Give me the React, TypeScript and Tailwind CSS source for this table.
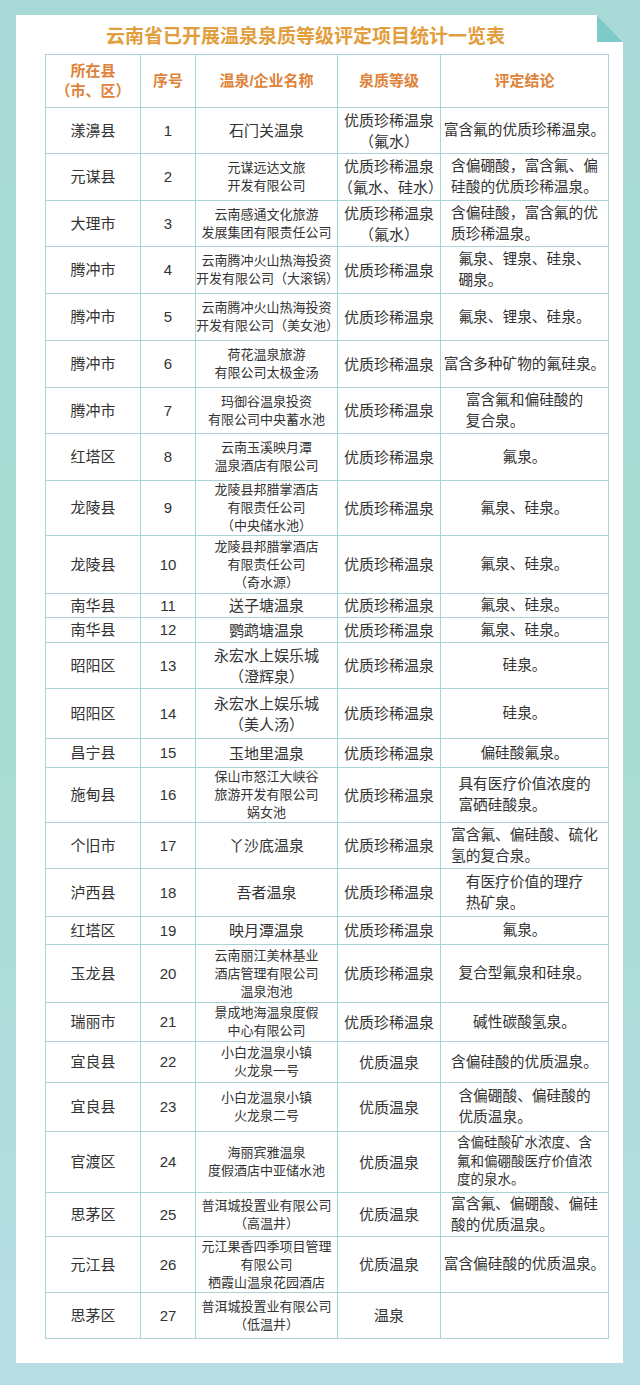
import React from 'react';

type Row = {
  h: number;
  region: string;
  no: number;
  name: string[];
  big?: boolean; // short names are set larger in the original
  grade: string[];
  result: string[];
  smallResult?: boolean;
};

const RARE = ['优质珍稀温泉'];
const GOOD = ['优质温泉'];

const rows: Row[] = [
  { h: 46, region: '漾濞县', no: 1, name: ['石门关温泉'], big: true, grade: ['优质珍稀温泉', '（氟水）'], result: ['富含氟的优质珍稀温泉。'] },
  { h: 47, region: '元谋县', no: 2, name: ['元谋远达文旅', '开发有限公司'], grade: ['优质珍稀温泉', '（氟水、硅水）'], result: ['含偏硼酸，富含氟、偏', '硅酸的优质珍稀温泉。'] },
  { h: 46, region: '大理市', no: 3, name: ['云南感通文化旅游', '发展集团有限责任公司'], grade: ['优质珍稀温泉', '（氟水）'], result: ['含偏硅酸，富含氟的优', '质珍稀温泉。'] },
  { h: 47, region: '腾冲市', no: 4, name: ['云南腾冲火山热海投资', '开发有限公司（大滚锅）'], grade: RARE, result: ['氟泉、锂泉、硅泉、', '硼泉。'] },
  { h: 47, region: '腾冲市', no: 5, name: ['云南腾冲火山热海投资', '开发有限公司（美女池）'], grade: RARE, result: ['氟泉、锂泉、硅泉。'] },
  { h: 47, region: '腾冲市', no: 6, name: ['荷花温泉旅游', '有限公司太极金汤'], grade: RARE, result: ['富含多种矿物的氟硅泉。'] },
  { h: 46, region: '腾冲市', no: 7, name: ['玛御谷温泉投资', '有限公司中央蓄水池'], grade: RARE, result: ['富含氟和偏硅酸的', '复合泉。'] },
  { h: 47, region: '红塔区', no: 8, name: ['云南玉溪映月潭', '温泉酒店有限公司'], grade: RARE, result: ['氟泉。'] },
  { h: 55, region: '龙陵县', no: 9, name: ['龙陵县邦腊掌酒店', '有限责任公司', '（中央储水池）'], grade: RARE, result: ['氟泉、硅泉。'] },
  { h: 58, region: '龙陵县', no: 10, name: ['龙陵县邦腊掌酒店', '有限责任公司', '（奇水源）'], grade: RARE, result: ['氟泉、硅泉。'] },
  { h: 24, region: '南华县', no: 11, name: ['送子塘温泉'], big: true, grade: RARE, result: ['氟泉、硅泉。'] },
  { h: 25, region: '南华县', no: 12, name: ['鹦鹉塘温泉'], big: true, grade: RARE, result: ['氟泉、硅泉。'] },
  { h: 46, region: '昭阳区', no: 13, name: ['永宏水上娱乐城', '（澄辉泉）'], big: true, grade: RARE, result: ['硅泉。'] },
  { h: 50, region: '昭阳区', no: 14, name: ['永宏水上娱乐城', '（美人汤）'], big: true, grade: RARE, result: ['硅泉。'] },
  { h: 29, region: '昌宁县', no: 15, name: ['玉地里温泉'], big: true, grade: RARE, result: ['偏硅酸氟泉。'] },
  { h: 55, region: '施甸县', no: 16, name: ['保山市怒江大峡谷', '旅游开发有限公司', '娲女池'], grade: RARE, result: ['具有医疗价值浓度的', '富硒硅酸泉。'] },
  { h: 46, region: '个旧市', no: 17, name: ['丫沙底温泉'], big: true, grade: RARE, result: ['富含氟、偏硅酸、硫化', '氢的复合泉。'] },
  { h: 48, region: '泸西县', no: 18, name: ['吾者温泉'], big: true, grade: RARE, result: ['有医疗价值的理疗', '热矿泉。'] },
  { h: 28, region: '红塔区', no: 19, name: ['映月潭温泉'], big: true, grade: RARE, result: ['氟泉。'] },
  { h: 58, region: '玉龙县', no: 20, name: ['云南丽江美林基业', '酒店管理有限公司', '温泉泡池'], grade: RARE, result: ['复合型氟泉和硅泉。'] },
  { h: 39, region: '瑞丽市', no: 21, name: ['景成地海温泉度假', '中心有限公司'], grade: RARE, result: ['碱性碳酸氢泉。'] },
  { h: 41, region: '宜良县', no: 22, name: ['小白龙温泉小镇', '火龙泉一号'], grade: GOOD, result: ['含偏硅酸的优质温泉。'] },
  { h: 49, region: '宜良县', no: 23, name: ['小白龙温泉小镇', '火龙泉二号'], grade: GOOD, result: ['含偏硼酸、偏硅酸的', '优质温泉。'] },
  { h: 61, region: '官渡区', no: 24, name: ['海丽宾雅温泉', '度假酒店中亚储水池'], grade: GOOD, result: ['含偏硅酸矿水浓度、含', '氟和偏硼酸医疗价值浓', '度的泉水。'], smallResult: true },
  { h: 44, region: '思茅区', no: 25, name: ['普洱城投置业有限公司', '（高温井）'], grade: GOOD, result: ['富含氟、偏硼酸、偏硅', '酸的优质温泉。'] },
  { h: 56, region: '元江县', no: 26, name: ['元江果香四季项目管理', '有限公司', '栖霞山温泉花园酒店'], grade: GOOD, result: ['富含偏硅酸的优质温泉。'] },
  { h: 46, region: '思茅区', no: 27, name: ['普洱城投置业有限公司', '（低温井）'], grade: ['温泉'], result: [] },
];

const cell = 'border border-[#aad3d6] p-0 text-center align-middle';

function Lines({ lines }: { lines: string[] }) {
  return (
    <>
      {lines.map((l, i) => (
        <div key={i}>{l}</div>
      ))}
    </>
  );
}

export default function App() {
  return (
    <div
      className="h-[1385px] w-[640px] overflow-hidden bg-gradient-to-b from-[#a9dad8] via-[#a7dcd1] to-[#b7dde5] pl-[16px] pt-[15px] [text-spacing-trim:space-all]"
      style={{ fontFamily: '"Liberation Sans", "Noto Sans CJK SC", sans-serif' }}
    >
      <div className="relative h-[1348px] w-[607px]">
        {/* card with the top-right corner cut off */}
        <div className="h-full w-full bg-white shadow-[0_0_3px_rgba(80,140,140,0.25)] [clip-path:polygon(0_0,581px_0,607px_27px,607px_100%,0_100%)]">
          <h1 className="pt-[9px] pr-[28px] pb-[4px] text-center text-[19px] leading-[26px] font-bold text-[#e29d3c]">
            云南省已开展温泉泉质等级评定项目统计一览表
          </h1>

          <table className="ml-[29px] w-[563px] table-fixed border-collapse text-[#333]">
            <colgroup>
              <col className="w-[95px]" />
              <col className="w-[55px]" />
              <col className="w-[142px]" />
              <col className="w-[103px]" />
              <col className="w-[168px]" />
            </colgroup>
            <thead>
              <tr className="h-[53px] text-[15px] leading-[20px] font-bold text-[#e0823a]">
                <th className={cell}>
                  所在县
                  <br />
                  （市、区）
                </th>
                <th className={cell}>序号</th>
                <th className={cell}>温泉/企业名称</th>
                <th className={cell}>泉质等级</th>
                <th className={cell}>评定结论</th>
              </tr>
            </thead>
            <tbody>
              {rows.map((r) => (
                <tr key={r.no} style={{ height: r.h }}>
                  <td className={`${cell} text-[15px] leading-[20px]`}>{r.region}</td>
                  <td className={`${cell} text-[15px] leading-[20px]`}>{r.no}</td>
                  <td
                    className={`${cell} whitespace-nowrap ${
                      r.big ? 'text-[15px] leading-[21px]' : 'text-[13px] leading-[18px]'
                    }`}
                  >
                    <Lines lines={r.name} />
                  </td>
                  <td className={`${cell} whitespace-nowrap text-[15px] leading-[21px]`}>
                    <Lines lines={r.grade} />
                  </td>
                  <td
                    className={`${cell} whitespace-nowrap ${
                      r.smallResult ? 'text-[13.5px] leading-[18.5px]' : 'text-[14.7px] leading-[21px]'
                    }`}
                  >
                    <div className="inline-block text-left">
                      <Lines lines={r.result} />
                    </div>
                  </td>
                </tr>
              ))}
            </tbody>
          </table>
        </div>

        {/* folded corner */}
        <svg className="absolute top-0 right-0" width="26" height="27" viewBox="0 0 26 27">
          <polygon points="0,0 0,27 26,27" fill="#7ecaca" />
        </svg>
      </div>
    </div>
  );
}
